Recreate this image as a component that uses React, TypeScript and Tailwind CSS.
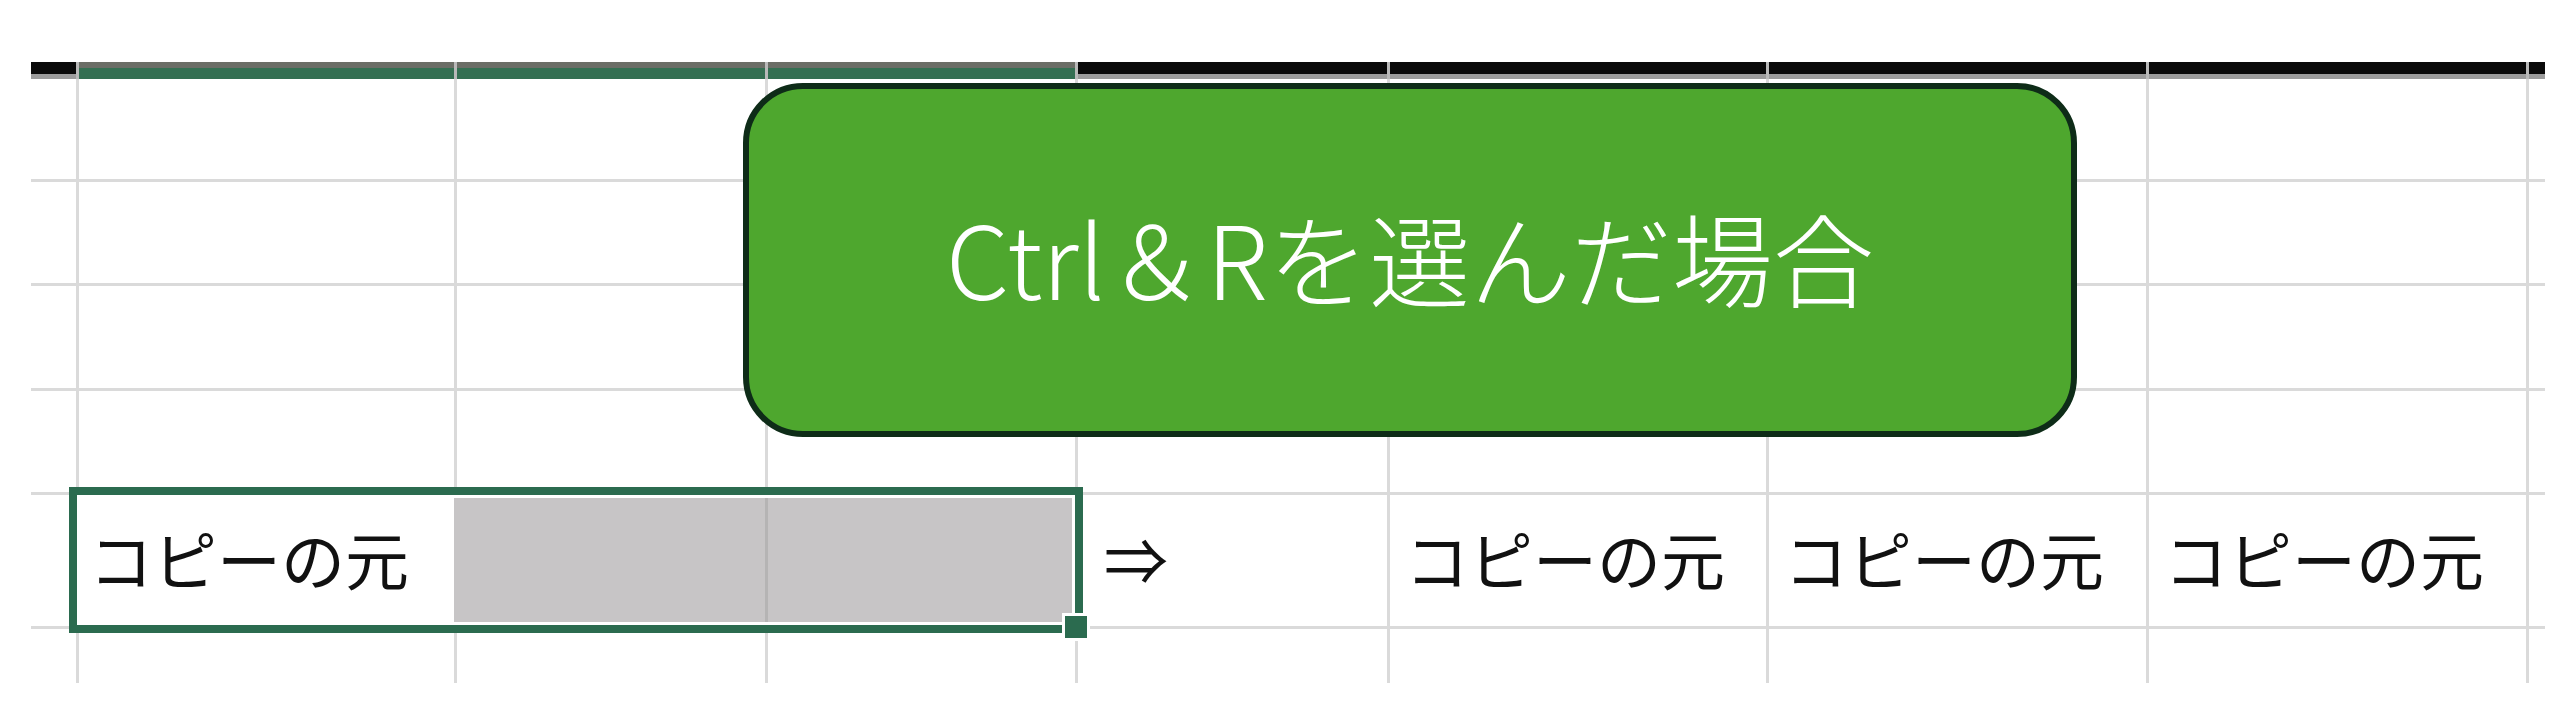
import React from 'react';

const colW = [
  'w-[48px]',
  'w-[378px]',
  'w-[311px]',
  'w-[310px]',
  'w-[312px]',
  'w-[379px]',
  'w-[380px]',
  'w-[380px]',
  'w-[16px]',
];

const rowH = ['h-[103px]', 'h-[104px]', 'h-[105px]', 'h-[104px]', 'h-[134px]', 'h-[54px]'];

// text in the 5th row, keyed by column index
const rowFive: Record<number, string> = {
  1: 'コピーの元',
  4: '⇒',
  5: 'コピーの元',
  6: 'コピーの元',
  7: 'コピーの元',
};

const App: React.FC = () => {
  const lastCol = colW.length - 1;
  const lastRow = rowH.length - 1;

  return (
    <div
      className="relative w-[2560px] h-[715px] overflow-hidden bg-white pt-[62px] pl-[31px]"
      style={{ fontFamily: '"Noto Sans CJK JP", "Noto Sans", sans-serif' }}
    >
      {/* Column header bottom edge */}
      <div className="flex h-[17px]">
        {colW.map((w, i) => {
          const selected = i >= 1 && i <= 3;
          return (
            <div
              key={`h-${i}`}
              className={`${w} flex flex-col ${i < lastCol ? 'border-r-[3px] border-[#b9b9b9]' : ''}`}
            >
              {selected ? (
                <>
                  <div className="h-[6px] bg-[#6b6d66]" />
                  <div className="flex-1 bg-[#346f52]" />
                </>
              ) : (
                <>
                  <div className="h-[12px] bg-[#0a0a0a]" />
                  <div className="flex-1 bg-[#9c9c9c]" />
                </>
              )}
            </div>
          );
        })}
      </div>

      {/* Grid rows */}
      {rowH.map((h, r) => (
        <div key={`r-${r}`} className={`flex ${h}`}>
          {colW.map((w, c) => {
            const gray = r === 4 && (c === 2 || c === 3);
            const text = r === 4 ? rowFive[c] : undefined;
            let borderR = 'border-r-[3px] border-r-[#dadada]';
            if (c === lastCol) borderR = '';
            else if (r === 4 && (c === 1 || c === 3)) borderR = 'border-r-[3px] border-r-[#c7c5c6]';
            else if (r === 4 && c === 2) borderR = 'border-r-[3px] border-r-[#b5b4b4]';
            return (
              <div
                key={`c-${r}-${c}`}
                className={`${w} flex items-center pb-[8px] ${borderR} ${
                  r < lastRow ? 'border-b-[3px] border-b-[#dadada]' : ''
                } ${gray ? 'bg-[#c7c5c6]' : ''}`}
              >
                {text && (
                  <span
                    className={`text-[64px] leading-none text-[#111] whitespace-nowrap ${
                      c === 4 ? 'pl-[26px]' : c === 1 ? 'pl-[10px]' : 'pl-[15px]'
                    }`}
                  >
                    {text}
                  </span>
                )}
              </div>
            );
          })}
        </div>
      ))}

      {/* Selection box */}
      <div className="absolute left-[69px] top-[487px] w-[1014px] h-[146px] border-[8px] border-[#2b6b4f] shadow-[inset_0_0_0_3px_#ffffff]" />
      <div className="absolute left-[1062px] top-[613px] w-[28px] h-[28px] border-[3px] border-white bg-[#2b6b4f]" />

      {/* Callout shape */}
      <div className="absolute left-[743px] top-[83px] w-[1334px] h-[354px] rounded-[60px] border-[6px] border-[#0e2c18] bg-[#4ea72e] flex items-center justify-center">
        <span className="text-[101px] font-light leading-none text-white whitespace-nowrap pb-[8px]">
          Ctrl＆Rを選んだ場合
        </span>
      </div>
    </div>
  );
};

export default App;
